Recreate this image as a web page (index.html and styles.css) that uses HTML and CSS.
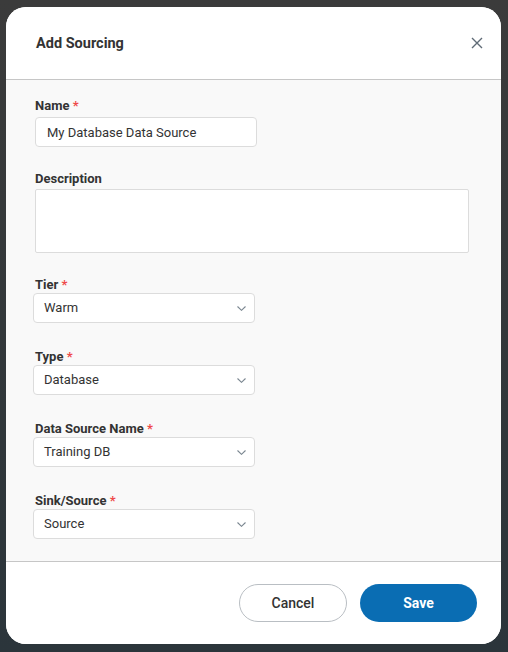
FILE: index.html
```html
<!DOCTYPE html>
<html>
<head>
<meta charset="utf-8">
<link rel="stylesheet" href="styles.css">
</head>
<body>
<div class="modal">
  <div class="header">
    <h1 class="title">Add Sourcing</h1>
    <button class="close" aria-label="Close">
      <svg width="12" height="12" viewBox="0 0 12 12"><path d="M1 1L11 11M11 1L1 11" stroke="#5f6b76" stroke-width="1.4" fill="none"/></svg>
    </button>
  </div>
  <div class="body">
    <div class="field name-field">
      <label class="label">Name <span class="req">*</span></label>
      <div class="input">My Database Data Source</div>
    </div>
    <div class="field desc-field">
      <label class="label">Description</label>
      <div class="textarea"></div>
    </div>
    <div class="field sel-field">
      <label class="label">Tier <span class="req">*</span></label>
      <div class="select"><span>Warm</span><svg class="chev" width="9" height="5" viewBox="0 0 9 5"><path d="M0.5 0.5L4.5 4.3L8.5 0.5" stroke="#7a8690" stroke-width="1.1" fill="none"/></svg></div>
    </div>
    <div class="field sel-field">
      <label class="label">Type <span class="req">*</span></label>
      <div class="select"><span>Database</span><svg class="chev" width="9" height="5" viewBox="0 0 9 5"><path d="M0.5 0.5L4.5 4.3L8.5 0.5" stroke="#7a8690" stroke-width="1.1" fill="none"/></svg></div>
    </div>
    <div class="field sel-field">
      <label class="label">Data Source Name <span class="req">*</span></label>
      <div class="select"><span>Training DB</span><svg class="chev" width="9" height="5" viewBox="0 0 9 5"><path d="M0.5 0.5L4.5 4.3L8.5 0.5" stroke="#7a8690" stroke-width="1.1" fill="none"/></svg></div>
    </div>
    <div class="field sel-field">
      <label class="label">Sink/Source <span class="req">*</span></label>
      <div class="select"><span>Source</span><svg class="chev" width="9" height="5" viewBox="0 0 9 5"><path d="M0.5 0.5L4.5 4.3L8.5 0.5" stroke="#7a8690" stroke-width="1.1" fill="none"/></svg></div>
    </div>
  </div>
  <div class="footer">
    <button class="btn cancel">Cancel</button>
    <button class="btn save">Save</button>
  </div>
</div>
</body>
</html>
```
FILE: styles.css
```css
html, body {
  margin: 0;
  height: 100%;
}
body {
  background: linear-gradient(180deg, #3b3b3b 0%, #33383b 50%, #2b353b 100%);
  font-family: Roboto, "Liberation Sans", Arial, sans-serif;
  padding: 7px 7px 8px 6px;
  box-sizing: border-box;
}
.modal {
  width: 495px;
  height: 637px;
  background: #fff;
  border-radius: 20px;
  overflow: hidden;
  display: flex;
  flex-direction: column;
}
.header {
  height: 72px;
  flex: none;
  display: flex;
  align-items: center;
  justify-content: space-between;
  padding: 0 18px 0 30px;
  border-bottom: 1px solid #c6c6c6;
  background: #fff;
}
.title {
  margin: 0;
  font-size: 14.5px;
  font-weight: 700;
  color: #333;
}
.close {
  border: 0;
  background: none;
  padding: 0;
  width: 12px;
  height: 12px;
  display: flex;
}
.body {
  flex: 1;
  background: #f9f9f9;
  padding: 18px 0 0 29px;
}
.label {
  display: block;
  font-size: 13px;
  line-height: 16px;
  font-weight: 700;
  color: #333;
}
.req {
  color: #ef4a4a;
}
.name-field .label { margin-bottom: 3px; }
.input {
  width: 222px;
  height: 30px;
  box-sizing: border-box;
  border: 1px solid #dcdcdc;
  border-radius: 4px;
  background: #fff;
  font-size: 13px;
  color: #333;
  display: flex;
  align-items: center;
  padding: 0 11px;
}
.desc-field { margin-top: 24px; }
.desc-field .label { margin-bottom: 2px; }
.textarea {
  width: 434px;
  height: 64px;
  box-sizing: border-box;
  border: 1px solid #dcdcdc;
  border-radius: 2px;
  background: #fff;
}
.sel-field { margin-top: 24px; }
.sel-field + .sel-field { margin-top: 26px; }
.select {
  margin-left: -2px;
  width: 222px;
  height: 30px;
  box-sizing: border-box;
  border: 1px solid #dcdcdc;
  border-radius: 4px;
  background: #fff;
  font-size: 13px;
  color: #333;
  display: flex;
  align-items: center;
  justify-content: space-between;
  padding: 0 8px 1px 10px;
}
.chev { display: block; margin-top: 1px; }
.footer {
  height: 83px;
  flex: none;
  box-sizing: border-box;
  border-top: 1px solid #c6c6c6;
  display: flex;
  align-items: center;
  justify-content: flex-end;
  gap: 13px;
  padding: 0 24px 1px 0;
  background: #fff;
}
.btn {
  height: 38px;
  border-radius: 19px;
  font-family: Roboto, "Liberation Sans", Arial, sans-serif;
  font-size: 14px;
  cursor: pointer;
}
.cancel {
  width: 108px;
  background: #fff;
  border: 1px solid #b9bec3;
  color: #333;
  font-weight: 500;
}
.save {
  width: 117px;
  background: #0a6db3;
  border: 0;
  color: #fff;
  font-weight: 700;
}
```
